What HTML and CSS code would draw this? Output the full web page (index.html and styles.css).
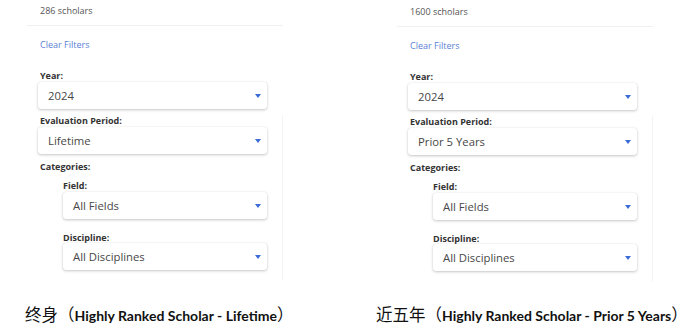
FILE: index.html
```html
<!doctype html>
<html>
  <head>
    <meta charset="utf-8">
    <title>Highly Ranked Scholar filters</title>
    <meta name="viewport" content="width=device-width, initial-scale=1">
    <link rel="stylesheet" href="styles.css">
  </head>
  <body>
    <div class="shots">
      <section class="panel">
        <div class="count">286 scholars</div>
        <a class="clear">Clear Filters</a>
        <div class="form">
          <div class="label label-year">Year:</div>
          <div class="select"><span>2024</span><i class="caret"></i></div>
          <div class="filters">
            <div class="label">Evaluation Period:</div>
            <div class="select"><span>Lifetime</span><i class="caret"></i></div>
            <div class="label label-cat">Categories:</div>
            <div class="sub">
              <div class="label label-field">Field:</div>
              <div class="select"><span>All Fields</span><i class="caret"></i></div>
              <div class="label label-disc">Discipline:</div>
              <div class="select"><span>All Disciplines</span><i class="caret"></i></div>
            </div>
          </div>
        </div>
      </section>
      <section class="panel panel-right">
        <div class="count">1600 scholars</div>
        <a class="clear">Clear Filters</a>
        <div class="form">
          <div class="label label-year">Year:</div>
          <div class="select"><span>2024</span><i class="caret"></i></div>
          <div class="filters">
            <div class="label">Evaluation Period:</div>
            <div class="select"><span>Prior 5 Years</span><i class="caret"></i></div>
            <div class="label label-cat">Categories:</div>
            <div class="sub">
              <div class="label label-field">Field:</div>
              <div class="select"><span>All Fields</span><i class="caret"></i></div>
              <div class="label label-disc">Discipline:</div>
              <div class="select"><span>All Disciplines</span><i class="caret"></i></div>
            </div>
          </div>
        </div>
      </section>
    </div>
    <div class="captions">
      <p class="caption"><span class="zh">终身（</span>Highly Ranked Scholar - Lifetime<span class="zh">）</span></p>
      <p class="caption"><span class="zh">近五年（</span>Highly Ranked Scholar - Prior 5 Years<span class="zh">）</span></p>
    </div>
  </body>
</html>
```

FILE: styles.css
```css
html,
body {
  margin: 0;
  background: #ffffff;
}
body {
  width: 700px;
  height: 333px;
  overflow: hidden;
  font-family: "Open Sans", "Noto Sans", sans-serif;
  color: #333333;
}

.shots {
  display: grid;
  grid-template-columns: 370px 330px;
}
.panel {
  padding-left: 27px;
}
.panel-right {
  padding-top: 1px;
}

.count {
  width: 243px;
  height: 25px;
  padding-left: 13px;
  line-height: 22px;
  font-size: 9px;
  color: #555555;
  border-bottom: 1px solid #f0f0f0;
}
.clear {
  display: block;
  margin: 13px 0 0 13px;
  line-height: 12px;
  font-size: 9px;
  color: #5a7fd4;
  cursor: pointer;
}

.form {
  margin-left: 11px;
  width: 245px;
}
.label {
  padding-left: 2px;
  margin-top: 6px;
  line-height: 12px;
  font-size: 9px;
  font-weight: 700;
  color: #333333;
}
.label-year {
  margin-top: 19px;
}
.label-cat {
  margin-top: 7px;
}
.label-field {
  line-height: 13px;
  padding-left: 0;
}
.label-disc {
  margin-top: 13px;
  line-height: 11px;
  padding-left: 0;
}

.select {
  display: flex;
  align-items: center;
  justify-content: space-between;
  box-sizing: border-box;
  width: 229px;
  height: 27px;
  padding: 0 6px 0 10px;
  background: #ffffff;
  border-radius: 3px;
  box-shadow: 0 1px 3px rgba(0, 0, 0, 0.22), 0 0 1px rgba(0, 0, 0, 0.12);
  font-size: 11.3px;
  color: #474747;
}
.caret {
  width: 0;
  height: 0;
  border-left: 3.5px solid transparent;
  border-right: 3.5px solid transparent;
  border-top: 4px solid #3a6bd6;
}

.filters {
  padding-bottom: 10px;
  border-right: 1px solid #f3f3f3;
}
.sub {
  margin-left: 25px;
}
.sub .select {
  width: 204px;
}

.captions {
  display: grid;
  grid-template-columns: 350px 350px;
  margin-top: 22px;
}
.caption {
  margin: 0;
  padding-left: 25px;
  line-height: 22px;
  font-family: Lato, "Noto Sans CJK SC", sans-serif;
  font-size: 14px;
  font-weight: 700;
  color: #111111;
  white-space: nowrap;
}
.caption:last-child {
  padding-left: 26px;
}
.zh {
  font-family: "Noto Sans CJK SC", sans-serif;
  font-size: 16.5px;
  font-weight: 400;
}
```
